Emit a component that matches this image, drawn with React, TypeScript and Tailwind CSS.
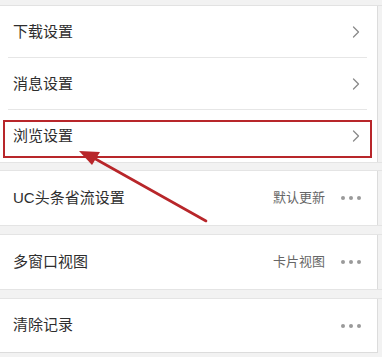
import { ChevronRight } from "lucide-react";

const font = { fontFamily: '"Liberation Sans", "Noto Sans CJK SC", sans-serif' };

const Dots = () => (
  <div className="flex items-center gap-[4px]">
    <span className="h-[4px] w-[4px] rounded-full bg-[#9a9a9a]" />
    <span className="h-[4px] w-[4px] rounded-full bg-[#9a9a9a]" />
    <span className="h-[4px] w-[4px] rounded-full bg-[#9a9a9a]" />
  </div>
);

const Row = ({
  label,
  value,
  chevron,
  divider,
  h = "h-[52px]",
}: {
  label: string;
  value?: string;
  chevron?: boolean;
  divider?: boolean;
  h?: string;
}) => (
  <div className={`relative flex ${h} items-center pl-[13px] pr-[16px]`}>
    <span className="flex-1 text-[15px] text-[#2e2e2e]">{label}</span>
    {value && <span className="mr-[16px] text-[13px] text-[#666]">{value}</span>}
    {chevron ? (
      <ChevronRight className="mr-[-5px] h-[20px] w-[20px] text-[#8a8a8a]" strokeWidth={1.5} />
    ) : (
      <Dots />
    )}
    {divider && <div className="absolute bottom-0 left-[8px] right-[10px] h-px bg-[#e6e6e6]" />}
  </div>
);

export default function App() {
  return (
    <div className="relative h-[357px] w-[382px] overflow-hidden bg-[#f2f2f2]" style={font}>
      <div className="h-[6px] border-b border-[#e2e2e2]" />
      <div className="mr-[4px] border-r border-[#dcdcdc] bg-white">
        <Row label="下载设置" chevron divider />
        <Row label="消息设置" chevron divider />
        <Row label="浏览设置" chevron />
      </div>
      <div className="h-[9px] border-y border-[#e4e4e4]" />
      <div className="mr-[4px] border-r border-[#dcdcdc] bg-white">
        <Row label="UC头条省流设置" value="默认更新" h="h-[54px]" />
      </div>
      <div className="h-[10px] border-y border-[#e4e4e4]" />
      <div className="mr-[4px] border-r border-[#dcdcdc] bg-white">
        <Row label="多窗口视图" value="卡片视图" h="h-[54px]" />
      </div>
      <div className="h-[10px] border-y border-[#e4e4e4]" />
      <div className="mr-[4px] border-r border-b border-[#dcdcdc] bg-white">
        <Row label="清除记录" h="h-[53px]" />
      </div>

      {/* annotation */}
      <div className="absolute left-[3px] top-[120px] h-[38px] w-[369px] border-[2.5px] border-[#b8262a]" />
      <svg className="absolute left-0 top-0" width="382" height="357" viewBox="0 0 382 357">
        <line x1="206" y1="221" x2="92" y2="157" stroke="#b8262a" strokeWidth="2.6" strokeLinecap="round" />
        <polygon points="79,151 100,152 92,165" fill="#b8262a" />
      </svg>
    </div>
  );
}
